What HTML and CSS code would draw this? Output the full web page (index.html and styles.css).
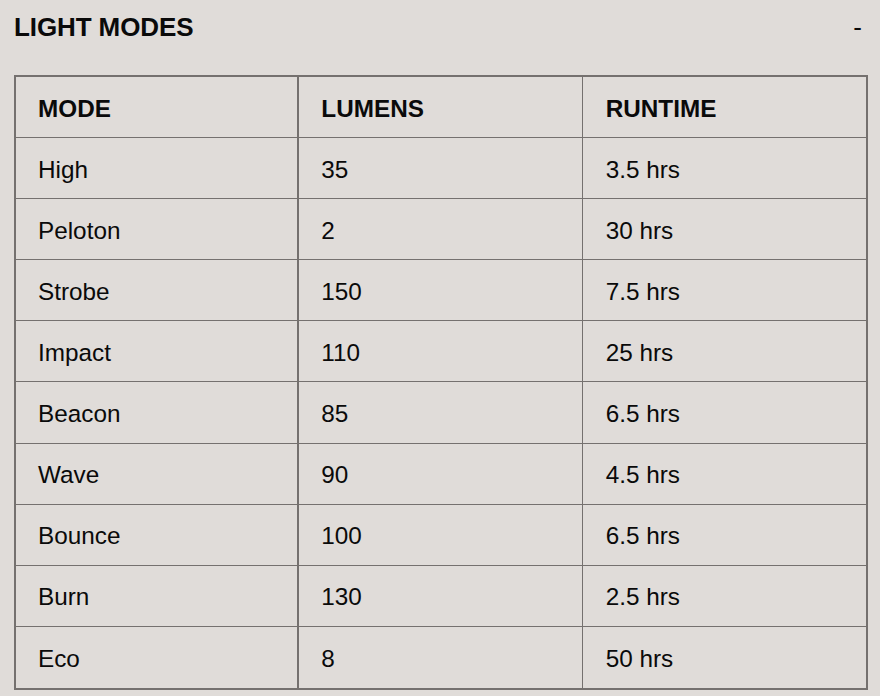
FILE: index.html
```html
<!DOCTYPE html>
<html>
<head>
<meta charset="utf-8">
<link rel="stylesheet" href="styles.css">
</head>
<body>
<section class="panel">
  <div class="panel-head">
    <h2 class="panel-title">LIGHT MODES</h2>
    <span class="toggle">-</span>
  </div>
  <table class="modes">
    <thead>
      <tr><th>MODE</th><th>LUMENS</th><th>RUNTIME</th></tr>
    </thead>
    <tbody>
      <tr><td>High</td><td>35</td><td>3.5 hrs</td></tr>
      <tr><td>Peloton</td><td>2</td><td>30 hrs</td></tr>
      <tr><td>Strobe</td><td>150</td><td>7.5 hrs</td></tr>
      <tr><td>Impact</td><td>110</td><td>25 hrs</td></tr>
      <tr><td>Beacon</td><td>85</td><td>6.5 hrs</td></tr>
      <tr><td>Wave</td><td>90</td><td>4.5 hrs</td></tr>
      <tr><td>Bounce</td><td>100</td><td>6.5 hrs</td></tr>
      <tr><td>Burn</td><td>130</td><td>2.5 hrs</td></tr>
      <tr><td>Eco</td><td>8</td><td>50 hrs</td></tr>
    </tbody>
  </table>
</section>
</body>
</html>
```
FILE: styles.css
```css
html, body {
  margin: 0;
  padding: 0;
  background: #e0dcd9;
  color: #0a0a0a;
  font-family: "Liberation Sans", Arial, sans-serif;
}
.panel {
  padding: 9px 12px 0 14px;
}
.panel-head {
  display: flex;
  justify-content: space-between;
  align-items: center;
  height: 36px;
  margin-bottom: 30px;
}
.panel-title {
  margin: 0;
  font-size: 26px;
  font-weight: 700;
  letter-spacing: -0.1px;
}
.toggle {
  font-size: 26px;
  margin-right: 6px;
}
.modes {
  width: 854px;
  border-collapse: separate;
  border-spacing: 0;
  border: 2px solid #75716f;
  table-layout: fixed;
}
.modes th, .modes td {
  height: 61.1px;
  padding: 3px 0 0 22px;
  box-sizing: border-box;
  text-align: left;
  vertical-align: middle;
  border-right: 1px solid #75716f;
  border-bottom: 1px solid #75716f;
  font-size: 24.3px;
}
.modes th {
  font-weight: 700;
}
.modes td {
  font-weight: 400;
}
.modes tr > :first-child {
  border-right-width: 2px;
}
.modes tr > :last-child {
  border-right: none;
  padding-left: 23px;
}
.modes tbody tr:last-child td {
  border-bottom: none;
}
```
